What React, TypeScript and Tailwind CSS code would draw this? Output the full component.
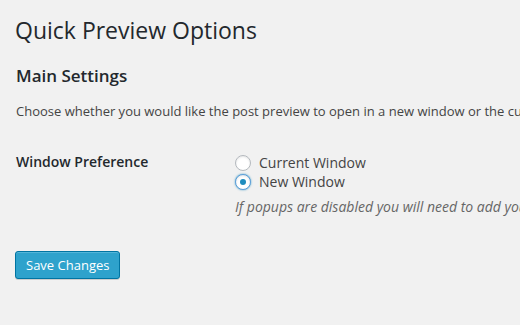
export default function App() {
  return (
    <div className="min-h-screen bg-[#f1f1f1] pl-[16px] pr-5 pt-[16px] overflow-hidden font-['Open_Sans',sans-serif] text-[13px] text-[#444]">
      <h2 className="-ml-px text-[23px] leading-[29px] font-normal text-[#23282d] whitespace-nowrap">Quick Preview Options</h2>
      <h3 className="mt-[20px] text-[17px] leading-[22px] font-semibold text-[#23282d] whitespace-nowrap">Main Settings</h3>
      <p className="mt-[14px] leading-[20px] whitespace-nowrap">
        Choose whether you would like the post preview to open in a new window or the current window.
      </p>
      <div className="mt-[32px] flex">
        <div className="w-[219px] shrink-0 text-[14px] leading-[18px] font-semibold text-[#23282d] whitespace-nowrap">
          Window Preference
        </div>
        <div className="flex flex-col whitespace-nowrap">
          <label className="flex items-center gap-[8px] text-[14px] leading-[19px]">
            <Radio checked={false} />
            Current Window
          </label>
          <label className="flex items-center gap-[8px] text-[14px] leading-[19px]">
            <Radio checked />
            New Window
          </label>
          <p className="mt-[6px] italic text-[14px] leading-[19px] text-[#666]">
            If popups are disabled you will need to add your site to the allowed list in your browser.
          </p>
        </div>
      </div>
      <button className="mt-[35px] -ml-px h-[28px] px-[10px] rounded-[3px] border border-[#0074a2] bg-[#2ea2cc] text-white text-[13px] leading-[26px] shadow-[inset_0_1px_0_rgba(120,200,230,0.5),0_1px_0_rgba(0,0,0,0.15)] whitespace-nowrap">
        Save Changes
      </button>
    </div>
  );
}

function Radio({ checked }: { checked: boolean }) {
  return (
    <span
      className={
        checked
          ? "w-[16px] h-[16px] rounded-full border border-[#5b9dd9] bg-white shadow-[0_0_2px_rgba(30,140,190,0.8),inset_0_1px_2px_rgba(0,0,0,0.1)] flex items-center justify-center shrink-0"
          : "w-[16px] h-[16px] rounded-full border border-[#b4b9be] bg-white shadow-[inset_0_1px_2px_rgba(0,0,0,0.1)] flex items-center justify-center shrink-0"
      }
    >
      {checked && <span className="w-[6px] h-[6px] rounded-full bg-[#1e8cbe]" />}
    </span>
  );
}
